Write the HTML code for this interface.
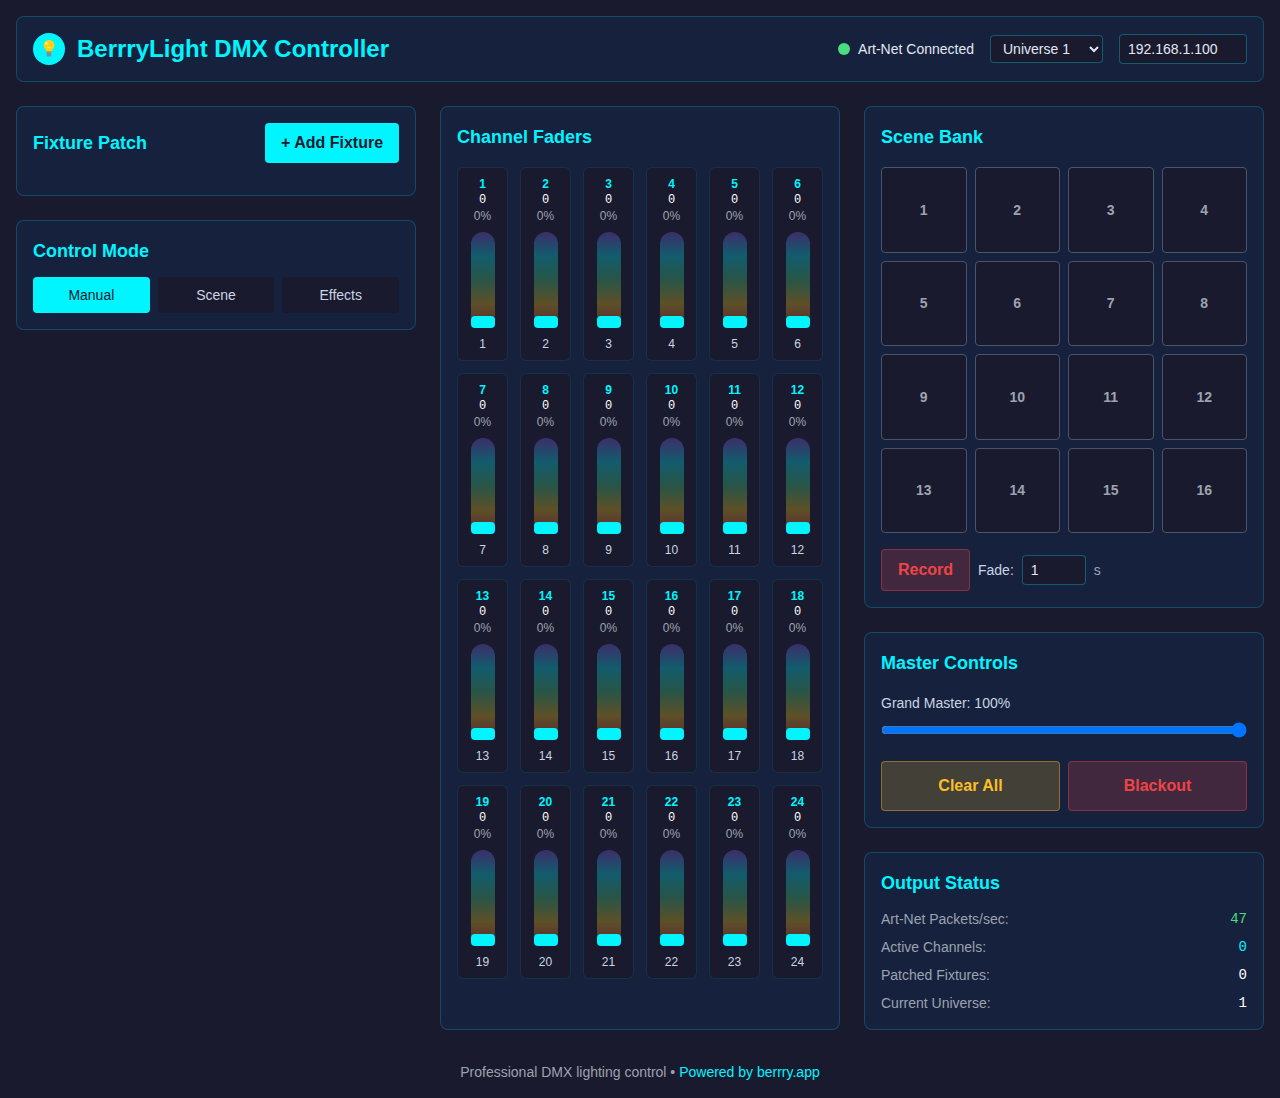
<!DOCTYPE html>
<html><head><meta charset="utf-8"><title>BerrryLight DMX Controller</title><style>
*{box-sizing:border-box;margin:0;padding:0}
html,body{background:#1a1a2e}
body{font-family:"Liberation Sans",sans-serif;color:#e2e8f0;padding:16px;width:1280px;height:1098px;overflow:hidden;position:relative}
.card{background:#16213e;border:1px solid rgba(0,245,255,0.2);border-radius:8px;padding:16px}
header.card{height:66px;display:flex;align-items:center;justify-content:space-between}
.logo{display:flex;align-items:center;gap:12px}
.bulb{width:32px;height:32px;border-radius:50%;background:#00f5ff;position:relative;flex:none}.bulb svg{position:absolute;left:0;top:0}
h1{font-size:24px;font-weight:700;color:#00f5ff;line-height:32px}
.hright{display:flex;align-items:center;gap:16px}
.status{display:flex;align-items:center;gap:8px;font-size:14px;color:#e2e8f0;line-height:16px}
.dot{width:12px;height:12px;border-radius:50%;background:#4ade80}
select,input[type=text],input[type=number]{background:#1a1a2e;color:#e2e8f0;border:1px solid rgba(0,245,255,0.3);border-radius:4px;font-size:14px;font-family:"Liberation Sans",sans-serif;outline:none}
select{padding:4px 8px;height:28px}
.ip{width:128px;height:30px;padding:6px 8px}
.grid{display:grid;grid-template-columns:400px 400px 400px;column-gap:24px;margin-top:24px;align-items:stretch}
.col{display:flex;flex-direction:column}
.col .card{margin-bottom:24px}
h2{font-size:18px;font-weight:700;color:#00f5ff;line-height:28px}
.fp-head{display:flex;justify-content:space-between;align-items:center;height:40px;margin-bottom:16px}
.btn-add{width:134px;height:40px;background:#00f5ff;color:#1a1a2e;border-radius:4px;font-size:16px;font-weight:700;display:flex;align-items:center;justify-content:center;line-height:18px}
.modes{display:flex;gap:8px;margin-top:12px}
.mode{flex:1;height:36px;border-radius:4px;background:#1a1a2e;color:#cbd5e1;font-size:14px;display:flex;align-items:center;justify-content:center;line-height:16px}
.mode.on{background:#00f5ff;color:#1a1a2e}
.faders{display:grid;grid-template-columns:repeat(6,51px);gap:12px;margin-top:16px}
.strip{height:194px;background:#1a1a2e;border:1px solid rgba(0,245,255,0.1);border-radius:6px;position:relative}
.strip div{position:absolute;left:0;right:0;text-align:center;line-height:16px}
.ch{font-size:12px;font-weight:700;color:#00f5ff;top:8px}
.val{font-family:"Liberation Mono",monospace;font-size:12px;color:#fff;top:24px}
.pct{font-size:12px;color:#9ca3af;top:40px}
.lbl{font-size:12px;color:#cbd5e1;top:168px}
.strip .track{left:13px;width:24px;right:auto;top:64px;height:96px;border-radius:12px;background:linear-gradient(to bottom,rgba(139,92,246,.3),rgba(0,245,255,.3) 25%,rgba(74,222,128,.3) 50%,rgba(250,204,21,.3) 75%,rgba(239,68,68,.3))}
.strip .thumb{left:13px;width:24px;right:auto;top:148px;height:12px;border-radius:4px;background:#00f5ff}
.scenes{display:grid;grid-template-columns:repeat(4,1fr);gap:8px;margin-top:16px}
.scene{height:85.5px;background:#1a1a2e;border:1px solid #4a5568;border-radius:4px;color:#9ca3af;font-size:14px;font-weight:700;display:flex;align-items:center;justify-content:center;line-height:16px}
.rec-row{display:flex;align-items:center;gap:8px;margin-top:16px;height:42px}
.rec{width:89px;height:42px;border:1px solid rgba(239,68,68,.4);background:rgba(239,68,68,.2);border-radius:4px;color:#ef4444;font-size:16px;font-weight:700;display:flex;align-items:center;justify-content:center;line-height:18px}
.fade-l{font-size:14px;color:#cbd5e1;line-height:16px}
.fade-i{width:64px;height:30px;padding:6px 8px}
.fade-s{font-size:14px;color:#9ca3af;line-height:16px}
.gm{font-size:14px;color:#cbd5e1;line-height:16px;position:absolute;left:16px;top:62px}
.master{position:relative;height:196px}
.master input[type=range]{position:absolute;left:16px;top:89px;width:366px;height:16px;margin:0}
.cbtns{display:flex;gap:8px;position:absolute;left:16px;right:16px;top:128px}
.cbtn{flex:1;height:50px;border-radius:4px;font-size:16px;font-weight:700;display:flex;align-items:center;justify-content:center;line-height:18px}
.clear{background:rgba(251,191,36,.2);border:1px solid rgba(251,191,36,.4);color:#fbbf24}
.black{background:rgba(239,68,68,.2);border:1px solid rgba(239,68,68,.4);color:#ef4444}
.rows{margin-top:12px;display:flex;flex-direction:column;gap:8px}
.srow{display:flex;justify-content:space-between;font-size:14px;color:#9ca3af;line-height:20px}
.srow b{font-family:"Liberation Mono",monospace;font-weight:400;color:#fff}
footer{position:absolute;left:0;right:0;top:1061px;text-align:center;font-size:14px;color:#9ca3af;line-height:22px}
footer span{color:#00f5ff}
</style></head>
<body>
<header class="card">
 <div class="logo"><div class="bulb"><svg width="32" height="32" viewBox="0 0 32 32"><path d="M16 7C12.9 7 10.6 9.3 10.6 12.3c0 2 1 3.2 2 4.3.6.7.9 1.3.9 2.2h5c0-.9.3-1.5.9-2.2 1-1.1 2-2.3 2-4.3C21.4 9.3 19.1 7 16 7z" fill="#fcd116"/><ellipse cx="13.6" cy="10.4" rx="1.6" ry="1.3" fill="#fff176" opacity=".8"/><path d="M14.4 13.8l1 1.2 1-1.2 1 1.2" stroke="#fff59d" stroke-width=".6" fill="none"/><rect x="13.5" y="18.2" width="5" height="1" fill="#e08a00"/><path d="M13.7 19.2h4.6v3.3c0 .7-.5 1.1-1.1 1.1h-2.4c-.6 0-1.1-.4-1.1-1.1z" fill="#78909c"/></svg></div><h1>BerrryLight DMX Controller</h1></div>
 <div class="hright">
  <div class="status"><div class="dot"></div><span>Art-Net Connected</span></div>
  <select><option>Universe 1</option><option>Universe 2</option><option>Universe 3</option><option>Universe 4</option><option>Universe 5</option><option>Universe 6</option><option>Universe 7</option><option>Universe 8</option><option>Universe 9</option><option>Universe 10</option><option>Universe 11</option><option>Universe 12</option><option>Universe 13</option><option>Universe 14</option><option>Universe 15</option><option>Universe 16</option></select>
  <input type="text" class="ip" value="192.168.1.100">
 </div>
</header>
<div class="grid">
 <div class="col">
  <div class="card"><div class="fp-head"><h2>Fixture Patch</h2><div class="btn-add">+ Add Fixture</div></div></div>
  <div class="card"><h2>Control Mode</h2><div class="modes"><div class="mode on">Manual</div><div class="mode">Scene</div><div class="mode">Effects</div></div></div>
 </div>
 <div class="card" style="margin-bottom:0"><h2>Channel Faders</h2><div class="faders"><div class="strip"><div class="ch">1</div><div class="val">0</div><div class="pct">0%</div><div class="track"></div><div class="thumb"></div><div class="lbl">1</div></div><div class="strip"><div class="ch">2</div><div class="val">0</div><div class="pct">0%</div><div class="track"></div><div class="thumb"></div><div class="lbl">2</div></div><div class="strip"><div class="ch">3</div><div class="val">0</div><div class="pct">0%</div><div class="track"></div><div class="thumb"></div><div class="lbl">3</div></div><div class="strip"><div class="ch">4</div><div class="val">0</div><div class="pct">0%</div><div class="track"></div><div class="thumb"></div><div class="lbl">4</div></div><div class="strip"><div class="ch">5</div><div class="val">0</div><div class="pct">0%</div><div class="track"></div><div class="thumb"></div><div class="lbl">5</div></div><div class="strip"><div class="ch">6</div><div class="val">0</div><div class="pct">0%</div><div class="track"></div><div class="thumb"></div><div class="lbl">6</div></div><div class="strip"><div class="ch">7</div><div class="val">0</div><div class="pct">0%</div><div class="track"></div><div class="thumb"></div><div class="lbl">7</div></div><div class="strip"><div class="ch">8</div><div class="val">0</div><div class="pct">0%</div><div class="track"></div><div class="thumb"></div><div class="lbl">8</div></div><div class="strip"><div class="ch">9</div><div class="val">0</div><div class="pct">0%</div><div class="track"></div><div class="thumb"></div><div class="lbl">9</div></div><div class="strip"><div class="ch">10</div><div class="val">0</div><div class="pct">0%</div><div class="track"></div><div class="thumb"></div><div class="lbl">10</div></div><div class="strip"><div class="ch">11</div><div class="val">0</div><div class="pct">0%</div><div class="track"></div><div class="thumb"></div><div class="lbl">11</div></div><div class="strip"><div class="ch">12</div><div class="val">0</div><div class="pct">0%</div><div class="track"></div><div class="thumb"></div><div class="lbl">12</div></div><div class="strip"><div class="ch">13</div><div class="val">0</div><div class="pct">0%</div><div class="track"></div><div class="thumb"></div><div class="lbl">13</div></div><div class="strip"><div class="ch">14</div><div class="val">0</div><div class="pct">0%</div><div class="track"></div><div class="thumb"></div><div class="lbl">14</div></div><div class="strip"><div class="ch">15</div><div class="val">0</div><div class="pct">0%</div><div class="track"></div><div class="thumb"></div><div class="lbl">15</div></div><div class="strip"><div class="ch">16</div><div class="val">0</div><div class="pct">0%</div><div class="track"></div><div class="thumb"></div><div class="lbl">16</div></div><div class="strip"><div class="ch">17</div><div class="val">0</div><div class="pct">0%</div><div class="track"></div><div class="thumb"></div><div class="lbl">17</div></div><div class="strip"><div class="ch">18</div><div class="val">0</div><div class="pct">0%</div><div class="track"></div><div class="thumb"></div><div class="lbl">18</div></div><div class="strip"><div class="ch">19</div><div class="val">0</div><div class="pct">0%</div><div class="track"></div><div class="thumb"></div><div class="lbl">19</div></div><div class="strip"><div class="ch">20</div><div class="val">0</div><div class="pct">0%</div><div class="track"></div><div class="thumb"></div><div class="lbl">20</div></div><div class="strip"><div class="ch">21</div><div class="val">0</div><div class="pct">0%</div><div class="track"></div><div class="thumb"></div><div class="lbl">21</div></div><div class="strip"><div class="ch">22</div><div class="val">0</div><div class="pct">0%</div><div class="track"></div><div class="thumb"></div><div class="lbl">22</div></div><div class="strip"><div class="ch">23</div><div class="val">0</div><div class="pct">0%</div><div class="track"></div><div class="thumb"></div><div class="lbl">23</div></div><div class="strip"><div class="ch">24</div><div class="val">0</div><div class="pct">0%</div><div class="track"></div><div class="thumb"></div><div class="lbl">24</div></div></div></div>
 <div class="col">
  <div class="card"><h2>Scene Bank</h2><div class="scenes"><div class="scene">1</div><div class="scene">2</div><div class="scene">3</div><div class="scene">4</div><div class="scene">5</div><div class="scene">6</div><div class="scene">7</div><div class="scene">8</div><div class="scene">9</div><div class="scene">10</div><div class="scene">11</div><div class="scene">12</div><div class="scene">13</div><div class="scene">14</div><div class="scene">15</div><div class="scene">16</div></div>
   <div class="rec-row"><div class="rec">Record</div><div class="fade-l">Fade:</div><input type="number" class="fade-i" value="1"><div class="fade-s">s</div></div></div>
  <div class="card master"><h2>Master Controls</h2><div class="gm">Grand Master: 100%</div>
   <input type="range" min="0" max="100" value="100">
   <div class="cbtns"><div class="cbtn clear">Clear All</div><div class="cbtn black">Blackout</div></div></div>
  <div class="card" style="margin-bottom:0"><h2>Output Status</h2><div class="rows">
   <div class="srow"><span>Art-Net Packets/sec:</span><b style="color:#4ade80">47</b></div>
   <div class="srow"><span>Active Channels:</span><b style="color:#00f5ff">0</b></div>
   <div class="srow"><span>Patched Fixtures:</span><b>0</b></div>
   <div class="srow"><span>Current Universe:</span><b>1</b></div>
  </div></div>
 </div>
</div>
<footer>Professional DMX lighting control • <span>Powered by berrry.app</span></footer>
</body></html>
